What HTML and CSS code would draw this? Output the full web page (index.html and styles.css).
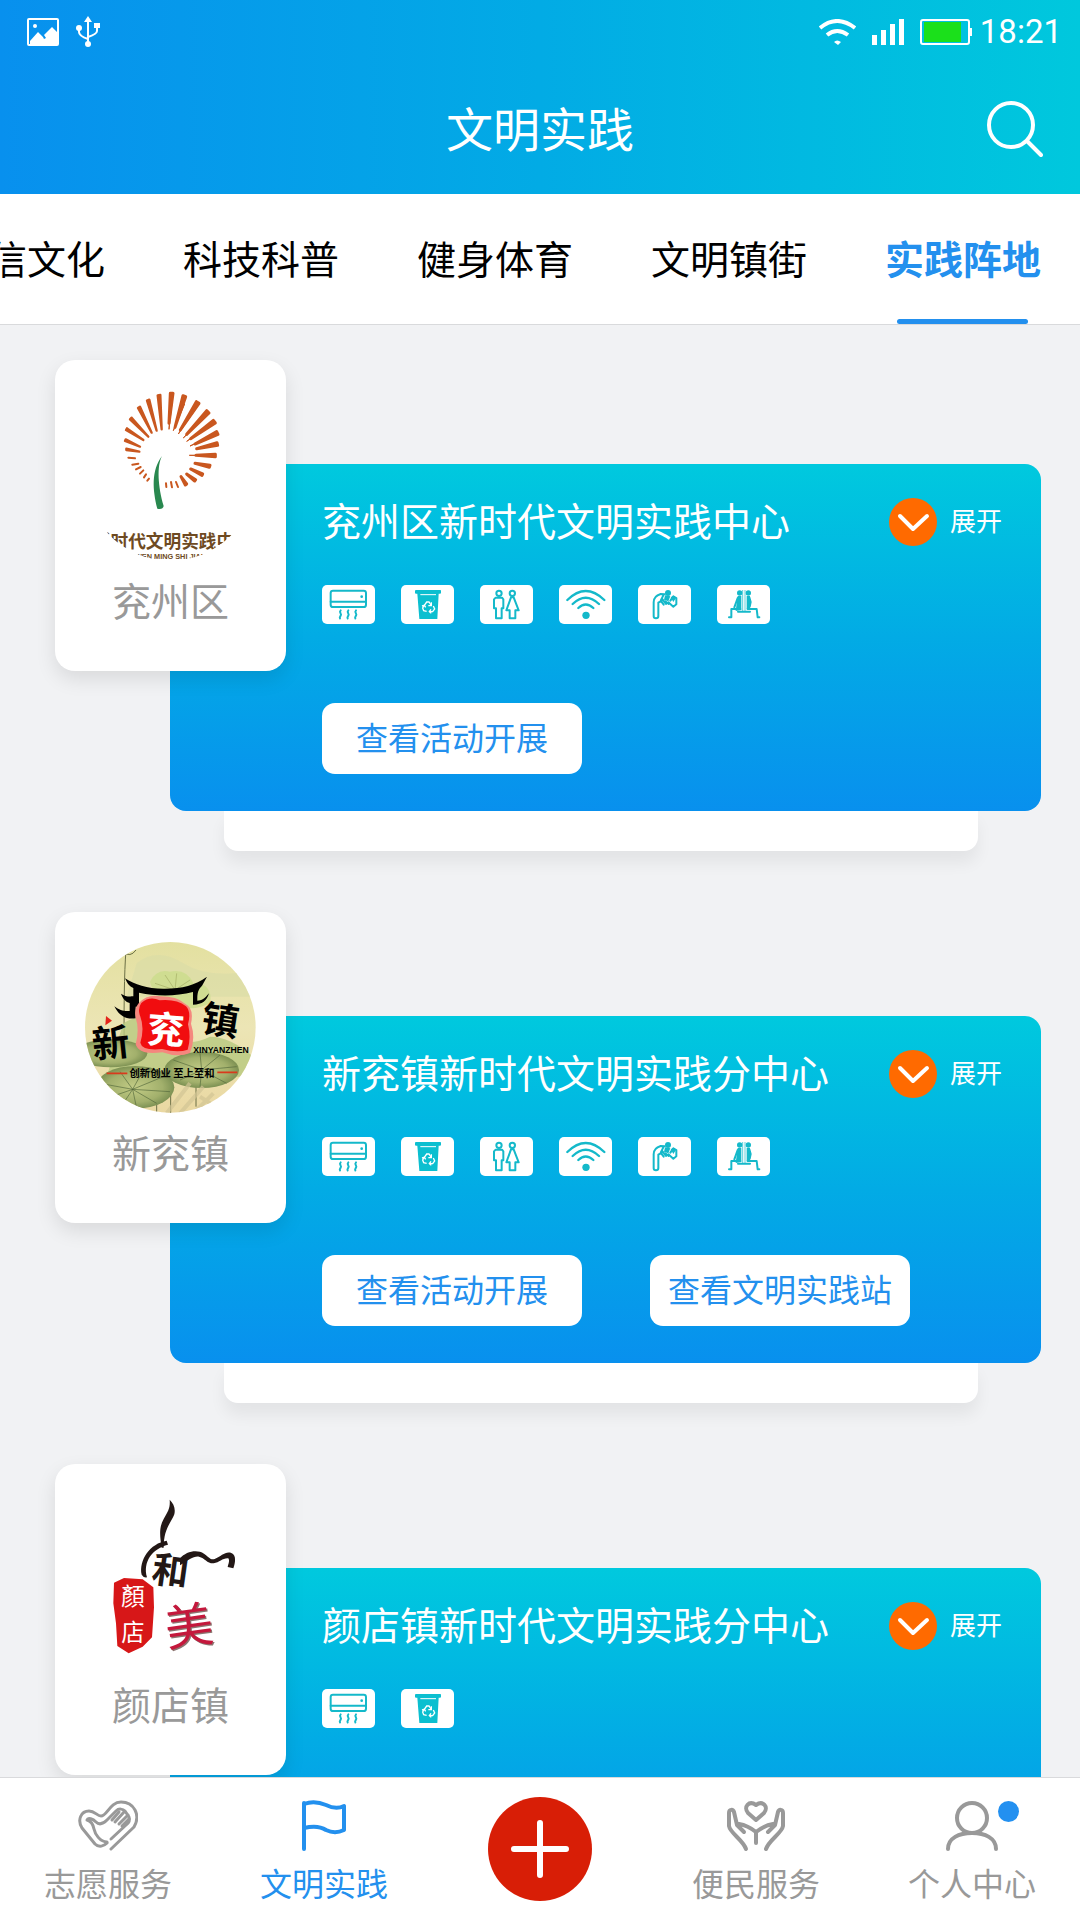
FILE: index.html
```
<!DOCTYPE html>
<html lang="zh-CN">
<head>
    <meta charset="UTF-8">
    <meta name="viewport" content="width=device-width, initial-scale=1.0">
    <title>文明实践</title>
    <link rel="stylesheet" href="styles.css">
</head>
<body>
    <!-- shared icons -->
    <svg class="sprite" aria-hidden="true">
        <symbol id="icon-ac" viewBox="36 45 159 117">
            <g fill="none" stroke="#14b9ca" stroke-width="6" stroke-linecap="round">
                <rect x="62" y="62" width="106" height="49" rx="7"/>
                <path d="M62 95H168"/>
                <path d="M92 121c-7 7 5 10 0 16-2 4-4 5-2 8M115 121c-7 7 5 10 0 16-2 4-4 5-2 8M138 121c-7 7 5 10 0 16-2 4-4 5-2 8"/>
            </g>
            <circle cx="155" cy="80" r="4" fill="#14b9ca"/>
        </symbol>
        <symbol id="icon-bin" viewBox="273 45 159 117">
            <path fill="#0bbfd0" d="M318 60h73q2 0 2 3v5q0 3-3 3h-4l-4 76h-54l-6-76h-4q-3 0-3-3v-5q0-3 3-3z"/>
            <path stroke="#fff" stroke-width="3" d="M331 74h47"/>
            <g fill="none" stroke="#fff" stroke-width="4">
                <path d="M343 106l7-10h7l6 9M370 108l4 9-6 8h-9M350 124l-9-2-3-8 4-7"/>
                <path d="M364 97v10h-9M363 118l-5 7 6 5M336 108l7-2 4 6"/>
            </g>
        </symbol>
        <symbol id="icon-toilet" viewBox="510 45 159 117">
            <g fill="none" stroke="#14b9ca" stroke-width="6" stroke-linejoin="round">
                <circle cx="567" cy="70" r="8"/>
                <circle cx="607" cy="70" r="8"/>
                <path d="M557 83h19l4 5v27h-5v30h-17v-30h-6V88z"/>
                <path d="M603 82h8l15 39h-10v24h-17v-24h-10z"/>
            </g>
        </symbol>
        <symbol id="icon-wifi" viewBox="27 45 159 117">
            <g fill="none" stroke="#14b9ca" stroke-width="7" stroke-linecap="round">
                <path d="M52 90Q107 36 163 90M68 102Q107 64 147 102M85 114Q107 93 130 114"/>
            </g>
            <circle cx="108" cy="136" r="11" fill="#14b9ca"/>
        </symbol>
        <symbol id="icon-water" viewBox="264 45 159 117">
            <g fill="none" stroke="#14b9ca" stroke-width="6" stroke-linecap="round" stroke-linejoin="round">
                <path d="M344 73l-12-1q-21 6-21 25v42q0 6 7 6t7-6V98l14-8M340 76l-8 16 9 12M336 86l12 16M346 94l10 8"/>
                <path d="M361 92l9-13 9 5v19l-9 7-15-13"/>
            </g>
            <circle cx="354" cy="69" r="9" fill="#14b9ca"/>
            <path fill="#14b9ca" d="M345 76l16 3-6 15-13-5zM362 82l8-5 8 7-8 12z"/>
        </symbol>
        <symbol id="icon-rest" viewBox="501 45 159 117">
            <circle cx="569" cy="69" r="8" fill="#14b9ca"/>
            <circle cx="595" cy="69" r="8" fill="#14b9ca"/>
            <path fill="#14b9ca" d="M563 78h11v42l-17 3zM590 78h10v40h-10z"/>
            <path fill="none" stroke="#14b9ca" stroke-width="2" d="M578 60v65M585 60v65"/>
            <g fill="none" stroke="#14b9ca" stroke-width="6" stroke-linecap="round" stroke-linejoin="round">
                <path d="M563 84l-10 28M571 117h-27v25h-7M564 125h36M593 117h27l3 25h5M598 82l4 14-3 14"/>
            </g>
        </symbol>
        <symbol id="icon-down" viewBox="0 0 48 48">
            <circle cx="24" cy="24" r="24" fill="#ff6a00"/>
            <path d="M11 18l13 13 14-13" fill="none" stroke="#fff" stroke-width="4" stroke-linecap="round" stroke-linejoin="round"/>
        </symbol>
    </svg>

    <header class="header">
        <div class="status-bar">
            <svg class="status-image" viewBox="0 0 32 28">
                <rect x="1" y="1" width="30" height="26" rx="1" fill="none" stroke="#fff" stroke-width="2"/>
                <circle cx="8" cy="8" r="2" fill="#fff"/>
                <path fill="#fff" d="M3 23l8-9 5 5 1 2 2-1-2-3 8-8 6 6v12H3z"/>
            </svg>
            <svg class="status-usb" viewBox="0 0 24 32">
                <path fill="none" stroke="#fff" stroke-width="2" d="M12 4v24M3 12v4q0 4 9 7M21 10v5q0 3-9 6"/>
                <circle cx="12" cy="28" r="3" fill="#fff"/>
                <circle cx="3" cy="12" r="3" fill="#fff"/>
                <path fill="#fff" d="M12 0l4 6H8zM18 7h6v5h-6z"/>
            </svg>
            <svg class="status-wifi" viewBox="0 0 37 26">
                <path fill="none" stroke="#fff" stroke-width="4" d="M1 9Q18-5 36 9M8 16q10-8 21 0"/>
                <path fill="#fff" d="M15 23q3-3 7 0l-3 3z"/>
            </svg>
            <svg class="status-signal" viewBox="0 0 32 26">
                <path fill="#fff" d="M0 16h5v10H0zM9 11h5v15H9zM18 5h5v21h-5zM27 0h5v26h-5z"/>
            </svg>
            <svg class="status-battery" viewBox="0 0 52 26">
                <rect x="1" y="1" width="48" height="24" rx="2" fill="none" stroke="#fff" stroke-width="2"/>
                <path fill="#1be01b" d="M4 3h37v20H4z"/>
                <path fill="#fff" d="M50 9h2v8h-2z"/>
            </svg>
            <span class="time">18:21</span>
        </div>
        <div class="title-bar">
            <h1>文明实践</h1>
            <button type="button" class="search-btn" aria-label="搜索">
                <svg viewBox="0 0 56 58">
                    <g fill="none" stroke="#fff" stroke-width="4" stroke-linecap="round">
                        <circle cx="24" cy="25" r="22"/>
                        <path d="M40 41l14 14"/>
                    </g>
                </svg>
            </button>
        </div>
    </header>

    <nav class="tabs">
        <a href="#culture">诚信文化</a>
        <a href="#science">科技科普</a>
        <a href="#sport">健身体育</a>
        <a href="#town">文明镇街</a>
        <a href="#base" class="active">实践阵地</a>
    </nav>

    <main class="list">
        <article class="station">
            <div class="tile">
                <svg class="logo" viewBox="135 150 513 513">
                    <defs>
                        <clipPath id="round-a"><circle cx="391" cy="406" r="256"/></clipPath>
                    </defs>
                    <g fill="#c9571f" stroke="#c9571f" stroke-linejoin="round">
                        <path stroke-width="9" d="M387 250L391 160H399zM405 262L429 167L437 170zM421 270L469 185L477 190zM440 283L500 212L507 219zM452 296L520 241L526 249zM465 312L530 275L534 283zM470 326L531 308L533 316zM468 346L526 343V350zM465 370L510 376L508 382zM452 387L488 402L486 406zM440 402L467 419L464 423zM423 410L440 432L436 435z"/>
                        <path stroke-width="3" d="M387 268L392 180H397zM400 272L428 190L434 192zM415 282L465 200L470 203zM430 294L495 222L500 226zM440 304L510 252L514 257zM450 318L520 282L523 288zM448 346L515 344V349z"/>
                        <path stroke-width="7" d="M365 268L353 166L361 165zM350 272L321 182L328 179zM335 278L294 204L300 200zM325 290L270 238L275 233zM310 300L258 270L261 265zM300 320L255 303L257 298zM298 335L259 330V326z"/>
                    </g>
                    <path stroke="#c9571f" stroke-width="6" stroke-linecap="round" d="M285 355L265 353M295 371L277 374M302 381L288 388M310 391L300 401M318 403L312 412M327 416L322 422M408 426L414 441M393 426L396 442M378 430L379 441"/>
                    <path fill="#29884f" d="M366 348C350 378 354 440 371 498Q369 509 352 506C338 450 333 392 366 348z"/>
                    <g clip-path="url(#round-a)" fill="#6e4a22" text-anchor="middle">
                        <text class="logo-name" x="397" y="623">新时代文明实践中心</text>
                        <text class="logo-pinyin" x="391" y="656">XIN SHI DAI WEN MING SHI JIAN ZHONG XIN</text>
                    </g>
                </svg>
                <h3>兖州区</h3>
            </div>
            <section class="panel">
                <div class="panel-head">
                    <h2>兖州区新时代文明实践中心</h2>
                    <button type="button" class="expand-btn"><svg><use href="#icon-down"/></svg>展开</button>
                </div>
                <div class="facilities">
                    <svg><use href="#icon-ac"/></svg>
                    <svg><use href="#icon-bin"/></svg>
                    <svg><use href="#icon-toilet"/></svg>
                    <svg><use href="#icon-wifi"/></svg>
                    <svg><use href="#icon-water"/></svg>
                    <svg><use href="#icon-rest"/></svg>
                </div>
                <div class="actions">
                    <button type="button">查看活动开展</button>
                </div>
            </section>
            <div class="drawer"></div>
        </article>

        <article class="station">
            <div class="tile">
                <svg class="logo" viewBox="135 126 513 513">
                    <defs>
                        <clipPath id="round-b"><circle cx="391" cy="382" r="256"/></clipPath>
                        <linearGradient id="paper" x1="0" y1="0" x2="0" y2="1">
                            <stop offset="0" stop-color="#e3e0a0"/>
                            <stop offset=".5" stop-color="#ece5b5"/>
                            <stop offset="1" stop-color="#ead8a2"/>
                        </linearGradient>
                        <radialGradient id="leaf">
                            <stop offset="0" stop-color="#c3cc86"/>
                            <stop offset=".7" stop-color="#a2b06c"/>
                            <stop offset="1" stop-color="#7d9153"/>
                        </radialGradient>
                    </defs>
                    <g clip-path="url(#round-b)">
                        <path fill="url(#paper)" d="M135 126h513v513H135z"/>
                        <path fill="#d8dca6" d="M290 190q60-50 140 0t218 20v80H260z" opacity=".6"/>
                        <path fill="#cbdc8c" d="M330 245q20-40 60-30 50-10 70 35 60 0 50 60-60 30-110 0-60-20-70-65z" opacity=".8"/>
                        <path fill="none" stroke="#a5ad63" stroke-width="2" d="M405 270l-60-20M405 270l-30-45M405 270l5-50M405 270l45-30M405 270l60 5"/>
                        <path fill="none" stroke="#6b6f45" stroke-width="3" d="M258 150q-8 100-5 340M350 600v50M392 570v70M468 540v80M250 155q20 20 38-5"/>
                        <path fill="#b8c97f" d="M250 370q60-40 120 20t140 20q60 0 130 60v60H200z" opacity=".8"/>
                        <ellipse cx="212" cy="460" rx="110" ry="42" fill="url(#leaf)"/>
                        <ellipse cx="485" cy="510" rx="112" ry="54" fill="url(#leaf)"/>
                        <ellipse cx="285" cy="562" rx="118" ry="64" fill="url(#leaf)"/>
                        <g fill="none" stroke="#55693c" stroke-width="2">
                            <path d="M278 568L180 550M278 568L200 595M278 568L240 625M278 568L290 625M278 568L350 610M278 568L390 575M278 568L370 530M278 568L310 510M278 568L240 515"/>
                            <path d="M485 510L400 480M485 510L420 540M485 510L480 560M485 510L560 550M485 510L590 500M485 510L540 465M485 510L480 460"/>
                        </g>
                        <path fill="none" stroke="#d2c594" stroke-width="12" d="M380 640l70-90M420 640l70-80M460 640l60-60M480 590l60 40" opacity=".7"/>
                    </g>
                    <path d="M255 235c30 20 70 32 120 31 52 0 90-10 126-36l-14 26c-8 10-16 15-15 46 13 0 22-6 35-22-6 22-20 34-48 34V276c-54 14-110 13-162 2v42h-10v35c-30 4-50-8-64-36 16 12 27 15 46 14v-24c-12-3-20-12-26-28 12 8 20 9 37 8v-25c-12-4-18-14-25-29z"/>
                    <path fill="#f5877e" d="M296 310q25-28 65-21 50 0 74 22 28 12 18 60 15 45-3 88-35 15-83-2-70 10-80-24 12-45 0-80-6-25 9-43z"/>
                    <path fill="#f10d0f" d="M304 309q25-22 55-8 50-5 79 18 16 16 6 54 10 40-1 76-30 10-77-2-60 6-65-19 14-45-2-84-6-20 5-35z"/>
                    <path fill="#e3231a" d="M198 348l18 14-20 14z"/>
                    <text class="brush seal" x="322" y="430" transform="rotate(4 380 385)">兖</text>
                    <text class="brush" x="156" y="470" transform="rotate(-6 212 430)">新</text>
                    <text class="brush" x="486" y="402" transform="rotate(9 542 360)">镇</text>
                    <text class="latin" x="460" y="460">XINYANZHEN</text>
                    <path stroke="#d93a1c" stroke-width="5" d="M200 520h62M532 517h60"/>
                    <text class="motto" x="396" y="531">创新创业 至上至和</text>
                </svg>
                <h3>新兖镇</h3>
            </div>
            <section class="panel">
                <div class="panel-head">
                    <h2>新兖镇新时代文明实践分中心</h2>
                    <button type="button" class="expand-btn"><svg><use href="#icon-down"/></svg>展开</button>
                </div>
                <div class="facilities">
                    <svg><use href="#icon-ac"/></svg>
                    <svg><use href="#icon-bin"/></svg>
                    <svg><use href="#icon-toilet"/></svg>
                    <svg><use href="#icon-wifi"/></svg>
                    <svg><use href="#icon-water"/></svg>
                    <svg><use href="#icon-rest"/></svg>
                </div>
                <div class="actions">
                    <button type="button">查看活动开展</button>
                    <button type="button">查看文明实践站</button>
                </div>
            </section>
            <div class="drawer"></div>
        </article>

        <article class="station">
            <div class="tile">
                <svg class="logo" viewBox="135 132 513 513">
                    <!-- ink flourish round the name -->
                    <path fill="#231816" d="M389 149c12 12 18 26 14 44-8 24-32 40-32 100h-6c-6-36-8-62 6-86 14-24 20-34 18-58z"/>
                    <path fill="#231816" d="M420 325c18-20 50-28 72-14 14 10 20 20 32 16 20-8 32-24 50-18 16 6 12 30 6 46l-17-4c2-10 7-18 2-26-16-2-26 12-44 15-20 1-26-16-44-20-18-2-30 10-57 26z"/>
                    <path fill="#231816" d="M380 272C330 280 296 330 305 374q6 10 16 8C308 336 336 296 384 284z"/>
                    <text class="ink" x="338" y="402" transform="rotate(8 390 350)">和</text>
                    <path fill="#d71718" d="M222 398l30-14 56 4 32 24 2 60-6 90-28 28-42 20-34-22-4-68-8-60z"/>
                    <text class="stamp" x="244" y="466">顏</text>
                    <text class="stamp" x="244" y="572">店</text>
                    <text class="rose-shadow" x="378" y="585" transform="rotate(-8 448 528)">美</text>
                    <text class="rose" x="374" y="581" transform="rotate(-8 445 525)">美</text>
                </svg>
                <h3>颜店镇</h3>
            </div>
            <section class="panel">
                <div class="panel-head">
                    <h2>颜店镇新时代文明实践分中心</h2>
                    <button type="button" class="expand-btn"><svg><use href="#icon-down"/></svg>展开</button>
                </div>
                <div class="facilities">
                    <svg><use href="#icon-ac"/></svg>
                    <svg><use href="#icon-bin"/></svg>
                </div>
                <div class="actions">
                    <button type="button">查看活动开展</button>
                    <button type="button">查看文明实践站</button>
                </div>
            </section>
            <div class="drawer"></div>
        </article>
    </main>

    <nav class="bottom-nav">
        <a href="#volunteer">
            <svg viewBox="0 0 60 52">
                <g fill="none" stroke="#999" stroke-width="3" stroke-linecap="round" stroke-linejoin="round">
                    <path d="M29 43c-3 3-8 5-12 1L4 28C-1 20 3 11 11 11c6 0 8 5 12 5C29 16 32 2 43 2c13 0 20 13 13 25L33 49"/>
                    <path d="M29 42C22 42 17 34 16 29c-1-5-3-8-7-9 1-3 6-1 9 2 4 4 8 1 11-2l9-9c3-3 7-2 9 0l4 6c1 3 0 6-3 8L33 39"/>
                    <path d="M34 20l7-8M37 22l9-10M41 24l9-9M44 26l7-7"/>
                </g>
            </svg>
            志愿服务
        </a>
        <a href="#practice" class="active">
            <svg viewBox="0 0 60 52">
                <path fill="none" stroke="#2390ee" stroke-width="4" stroke-linecap="round" stroke-linejoin="round" d="M10 3v46M10 4c8-3 15-2 22 1 6 3 12 4 18 1v24c-6 3-12 3-18 0-6-4-14-4-22-2"/>
            </svg>
            文明实践
        </a>
        <button type="button" class="add-btn" aria-label="发布">
            <svg viewBox="0 0 104 104">
                <path d="M52 26v52M26 52h52" stroke="#fff" stroke-width="6" stroke-linecap="round"/>
            </svg>
        </button>
        <a href="#service">
            <svg viewBox="0 0 60 52">
                <g fill="none" stroke="#999" stroke-width="4" stroke-linecap="round" stroke-linejoin="round">
                    <path d="M30 20L22 13C17 7 23 0 30 5c7-5 13 2 8 8z"/>
                    <path d="M20 49C17 40 4 33 3 26V13c0-4 4-4 5-1l3 13 7 7M13 24c6 1 12 4 17 8v11"/>
                    <path d="M40 49c3-9 16-16 17-23V13c0-4-4-4-5-1l-3 13-7 7M47 24c-6 1-12 4-17 8"/>
                </g>
            </svg>
            便民服务
        </a>
        <a href="#me">
            <span class="with-badge">
                <svg viewBox="0 0 60 52">
                    <g fill="none" stroke="#999" stroke-width="4" stroke-linecap="round">
                        <circle cx="30" cy="18" r="15"/>
                        <path d="M6 49C6 38 17 33 30 33s24 5 24 16"/>
                    </g>
                </svg>
                <i class="badge"></i>
            </span>
            个人中心
        </a>
    </nav>
</body>
</html>
```
FILE: styles.css
```
* {
    box-sizing: border-box;
}

body {
    font-family: Roboto, "Noto Sans CJK SC", sans-serif;
    margin: 0;
    display: flex;
    flex-direction: column;
    height: 100vh;
    background-color: #f1f2f4;
}

h1, h2, h3 {
    margin: 0;
    font-weight: normal;
}

a {
    text-decoration: none;
}

button {
    border: none;
    padding: 0;
    background: none;
    font-family: inherit;
    cursor: pointer;
}

svg {
    display: block;
}

.sprite {
    display: none;
}

/* header */
.header {
    flex: none;
    color: #fff;
    background: linear-gradient(to right, #0890ee, #02abe5 50%, #00c8dd);
}

.status-bar {
    display: flex;
    align-items: center;
    height: 64px;
    padding: 0 18px 0 27px;
}

.status-image {
    width: 32px;
    height: 28px;
}

.status-usb {
    width: 24px;
    height: 32px;
    margin-left: 17px;
}

.status-wifi {
    width: 37px;
    height: 26px;
    margin-left: auto;
}

.status-signal {
    width: 32px;
    height: 26px;
    margin-left: 16px;
}

.status-battery {
    width: 52px;
    height: 26px;
    margin-left: 16px;
}

.time {
    margin-left: 8px;
    font-size: 33px;
    line-height: 40px;
}

.title-bar {
    display: grid;
    grid-template-columns: 1fr auto 1fr;
    align-items: center;
    height: 130px;
    padding: 0 37px;
}

.title-bar h1 {
    grid-column: 2;
    padding-top: 4px;
    font-size: 47px;
    line-height: 64px;
}

.search-btn {
    justify-self: end;
}

.search-btn svg {
    width: 56px;
    height: 58px;
}

/* category tabs */
.tabs {
    flex: none;
    display: flex;
    justify-content: flex-end;
    overflow: hidden;
    background-color: #fff;
    border-bottom: 1px solid #d9dadc;
}

.tabs a {
    flex: none;
    padding: 4px 39px 0;
    font-size: 39px;
    line-height: 126px;
    color: #000;
}

.tabs .active {
    display: grid;
    font-weight: bold;
    color: #2390ee;
}

.tabs .active::after {
    content: "";
    justify-self: center;
    width: 131px;
    height: 5px;
    margin-top: -5px;
    border-radius: 3px;
    background-color: #2390ee;
}

/* station list */
.list {
    flex: 1;
    min-height: 0;
    display: flex;
    flex-direction: column;
    gap: 61px;
    padding: 35px 39px 61px 55px;
    overflow-y: auto;
    scrollbar-width: none;
}

.station {
    flex: none;
    display: grid;
    grid-template-columns: 115px 116px 1fr;
    grid-template-rows: 104px auto 40px;
}

.tile {
    grid-column: 1 / 3;
    grid-row: 1 / 3;
    align-self: start;
    z-index: 1;
    display: flex;
    flex-direction: column;
    align-items: center;
    gap: 13px;
    padding: 30px 0 39px;
    border-radius: 20px;
    background-color: #fff;
    box-shadow: 0 8px 20px rgba(0, 0, 0, 0.1);
}

.logo {
    width: 171px;
    height: 171px;
}

.tile h3 {
    font-size: 39px;
    line-height: 58px;
    color: #999;
}

.panel {
    grid-column: 2 / 4;
    grid-row: 2;
    padding: 34px 39px 37px 152px;
    border-radius: 16px;
    color: #fff;
    background: linear-gradient(to bottom, #00c9de, #02abe5 50%, #0890ee);
}

.panel-head {
    display: flex;
    justify-content: space-between;
    align-items: center;
    height: 48px;
}

.panel-head h2 {
    padding-top: 2px;
    font-size: 39px;
    line-height: 46px;
}

.expand-btn {
    display: flex;
    align-items: center;
    gap: 13px;
    font-size: 26px;
    line-height: 48px;
    color: #fff;
}

.expand-btn svg {
    width: 48px;
    height: 48px;
}

.facilities {
    display: flex;
    gap: 26px;
    margin-top: 39px;
}

.facilities svg {
    width: 53px;
    height: 39px;
    border-radius: 5px;
    background-color: #fff;
}

.actions {
    display: flex;
    gap: 68px;
    margin-top: 79px;
}

.actions button {
    width: 260px;
    padding-top: 2px;
    border-radius: 13px;
    background-color: #fff;
    color: #2390ee;
    font-size: 32px;
    line-height: 69px;
}

.drawer {
    grid-column: 2 / 4;
    grid-row: 3;
    margin: 0 63px 0 54px;
    border-radius: 0 0 14px 14px;
    background-color: #fff;
    box-shadow: 0 12px 16px rgba(0, 0, 0, 0.06);
}

/* lettering inside the logos */
.logo text {
    font-family: "Noto Sans CJK SC", sans-serif;
    font-weight: bold;
}

.logo .logo-name {
    font-size: 53px;
}

.logo .logo-pinyin {
    font-family: "Liberation Sans", sans-serif;
    font-size: 22px;
}

.logo .brush {
    font-size: 112px;
}

.logo .seal {
    fill: #fff;
}

.logo .latin {
    font-family: "Liberation Sans", sans-serif;
    font-size: 26px;
}

.logo .motto {
    font-size: 31px;
    text-anchor: middle;
}

.logo .ink {
    font-size: 110px;
    fill: #231816;
}

.logo .stamp {
    font-size: 70px;
    font-weight: normal;
    fill: #fff;
}

.logo .rose,
.logo .rose-shadow {
    font-size: 145px;
    font-weight: normal;
    fill: #c4183c;
}

.logo .rose-shadow {
    fill: #8c7470;
}

/* bottom navigation */
.bottom-nav {
    flex: none;
    display: grid;
    grid-template-columns: repeat(5, 1fr);
    justify-items: center;
    border-top: 1px solid #d9dadc;
    background-color: #fff;
}

.bottom-nav a {
    display: flex;
    flex-direction: column;
    align-items: center;
    gap: 9px;
    padding: 22px 0 11px;
    font-size: 32px;
    line-height: 48px;
    color: #999;
}

.bottom-nav .active {
    color: #2390ee;
}

.bottom-nav a svg {
    width: 60px;
    height: 52px;
}

.add-btn {
    align-self: center;
    border-radius: 50%;
    background-color: #d81e06;
}

.add-btn svg {
    width: 104px;
    height: 104px;
}

.with-badge {
    position: relative;
}

.badge {
    position: absolute;
    top: 1px;
    right: -17px;
    width: 21px;
    height: 21px;
    border-radius: 50%;
    background-color: #2390f0;
}
```
